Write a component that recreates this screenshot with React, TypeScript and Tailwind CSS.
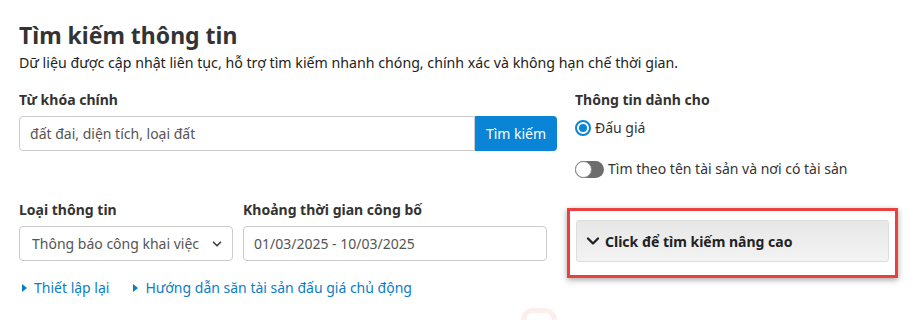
import { ChevronDown } from "lucide-react"

const font = { fontFamily: '"Noto Sans", "Open Sans", sans-serif' }

function Caret() {
	return (
		<svg width="5" height="8" viewBox="0 0 5 8" className="mr-[7px] inline-block">
			<path d="M0 0 L5 4 L0 8 Z" fill="#0b7dc6" />
		</svg>
	)
}

export default function App() {
	return (
		<div className="h-[320px] w-[918px] overflow-hidden bg-white text-[#333]" style={font}>
			<div className="relative px-[19px] pt-[20px]">
				<h1 className="text-[23px] font-bold leading-[30px] text-[#333]">Tìm kiếm thông tin</h1>
				<p className="mt-[3px] text-[14.2px] leading-[20px] text-[#222]">
					Dữ liệu được cập nhật liên tục, hỗ trợ tìm kiếm nhanh chóng, chính xác và không hạn chế thời gian.
				</p>

				{/* top row */}
				<div className="mt-[17px] flex gap-[18px]">
					<div className="w-[538px]">
						<label className="block text-[14px] font-bold leading-[20px]">Từ khóa chính</label>
						<div className="mt-[6px] flex h-[35px]">
							<input
								className="h-full flex-1 rounded-l-[4px] border border-[#ccc] px-[10px] text-[14px] text-[#555] outline-none"
								style={font}
								defaultValue="đất đai, diện tích, loại đất"
							/>
							<button className="h-full w-[82px] rounded-r-[4px] bg-[#0a84d6] text-[14px] text-white">Tìm kiếm</button>
						</div>
					</div>
					<div className="flex-1">
						<div className="text-[14px] font-bold leading-[20px]">Thông tin dành cho</div>
						<div className="mt-[8px] flex items-center gap-[4px] text-[14px] leading-[20px]">
							<span className="flex h-[16px] w-[16px] items-center justify-center rounded-full border-[2px] border-[#0a84d6]">
								<span className="h-[8px] w-[8px] rounded-full bg-[#0a84d6]" />
							</span>
							<span>Đấu giá</span>
						</div>
						<div className="mt-[21px] flex items-center gap-[4px] text-[14px] leading-[20px]">
							<span className="flex h-[17px] w-[29px] items-center rounded-full bg-[#6d6d6d]">
								<span className="h-[17px] w-[17px] rounded-full border border-[#888] bg-white" />
							</span>
							<span>Tìm theo tên tài sản và nơi có tài sản</span>
						</div>
					</div>
				</div>

				{/* second row */}
				<div className="mt-[21px] flex items-start">
					<div>
						<div className="flex">
							<div className="w-[214px]">
								<label className="block text-[14px] font-bold leading-[20px]">Loại thông tin</label>
								<div className="mt-[6px] flex h-[35px] items-center justify-between rounded-[4px] border border-[#ccc] pl-[12px] pr-[8px] text-[14px] text-[#555]">
									<span className="truncate">Thông báo công khai việc</span>
									<ChevronDown size={14} strokeWidth={3} className="text-[#444]" />
								</div>
							</div>
							<div className="ml-[10px] w-[304px]">
								<label className="block text-[14px] font-bold leading-[20px]">Khoảng thời gian công bố</label>
								<div className="mt-[6px] flex h-[35px] items-center rounded-[4px] border border-[#ccc] px-[10px] text-[14px] text-[#555]">
									01/03/2025 - 10/03/2025
								</div>
							</div>
						</div>
						<div className="mt-[17px] flex text-[14px] leading-[20px] text-[#0b7dc6]">
							<span className="ml-[3px] flex items-center">
								<Caret />
								Thiết lập lại
							</span>
							<span className="ml-[24px] flex items-center">
								<Caret />
								Hướng dẫn săn tài sản đấu giá chủ động
							</span>
						</div>
					</div>
					<div className="ml-[20px] mt-[8px] h-[70px] w-[331px] border-[3px] border-[#e9413f] px-[6px] pt-[9px] shadow-[0_2px_6px_rgba(0,0,0,0.35)]">
						<div className="flex h-[42px] items-center rounded-[3px] border border-[#ddd] bg-gradient-to-b from-[#e7e7e7] to-[#f3f3f3] pl-[6px] text-[14px] font-bold text-[#222]">
							<ChevronDown size={20} strokeWidth={2.8} className="mr-[2px]" />
							Click để tìm kiếm nâng cao
						</div>
					</div>
				</div>

				<div className="absolute left-[521px] top-[308px] h-[24px] w-[36px] rounded-full border-[5px] border-[#fdeeee]" />
			</div>
		</div>
	)
}
